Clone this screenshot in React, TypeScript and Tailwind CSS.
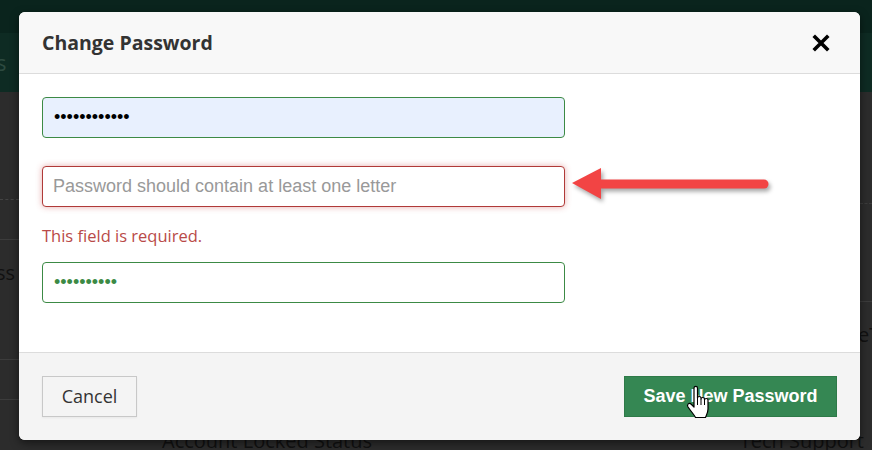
import React from "react";

function CloseIcon() {
  return (
    <svg width="18" height="18" viewBox="0 0 18 18" aria-hidden="true">
      <path d="M3 3 L15 15 M15 3 L3 15" stroke="#000" strokeWidth="3.6" strokeLinecap="square" />
    </svg>
  );
}

function Arrow() {
  return (
    <svg
      width="212"
      height="44"
      viewBox="0 0 212 44"
      className="pointer-events-none absolute left-[565px] top-[163px]"
      style={{ filter: "drop-shadow(2px 3px 2px rgba(0,0,0,0.35))" }}
    >
      <line x1="32" y1="21" x2="199" y2="21" stroke="#f24444" strokeWidth="9" strokeLinecap="round" />
      <path d="M7 20 L36 5 L36 36 Z" fill="#f24444" />
    </svg>
  );
}

function HandCursor() {
  return (
    <svg
      width="26"
      height="34"
      viewBox="0 0 26 34"
      className="pointer-events-none absolute left-[685px] top-[385px]"
    >
      <path
        d="M9 3 C9 0.8 12.5 0.8 12.5 3 L12.5 13 C12.5 11 16 11 16 13 L16 14 C16 12 19.5 12 19.5 14 L19.5 15 C19.5 13 23 13 23 15 L23 24 C23 28 21.5 30 20.5 32.5 L10.5 32.5 C9.5 30 6 26.5 3 22 C1.5 19.5 4 17 6.5 19.5 L9 22 Z"
        fill="#fff"
        stroke="#000"
        strokeWidth="1.2"
        strokeLinejoin="round"
      />
      <path d="M12.5 13 L12.5 20 M16 14 L16 20 M19.5 15 L19.5 20" stroke="#000" strokeWidth="1" />
    </svg>
  );
}

function Backdrop() {
  return (
    <div className="flex h-full flex-col">
      <div className="h-[33px] bg-[#0a241d]" />
      <div className="flex h-[59px] items-center bg-[#0e2b23] text-[22px] text-[#2d4a40]">
        <span className="-ml-[4px]">s</span>
      </div>
      <div className="flex flex-1 justify-between">
        <div className="flex w-[19px] flex-col">
          <div className="h-[108px] border-b border-dashed border-[#444]" />
          <div className="h-[40px] border-b border-[#3c3c3c]" />
          <div className="h-[120px] border-b border-[#3c3c3c] pt-[19px] text-[20px] leading-[28px] text-[#111]">
            <span className="-ml-[4px]">ss</span>
          </div>
          <div className="h-[40px] border-b border-[#3c3c3c]" />
        </div>
        <div className="flex w-[12px] flex-col overflow-hidden">
          <div className="h-[112px] border-b border-dashed border-[#3c3c3c]" />
          <div className="h-[98px] border-b border-[#3c3c3c]" />
          <div className="pt-[18px] text-[20px] text-[#111]">
            <span className="-ml-[2px]">eT</span>
          </div>
        </div>
      </div>
      <div className="flex h-[14px] items-start justify-between overflow-hidden pl-[162px] pr-[8px] text-[20px] leading-[16px] text-[#111]">
        <span className="-mt-[3px]">Account Locked Status</span>
        <span className="-mt-[3px]">Tech Support</span>
      </div>
    </div>
  );
}

export default function App() {
  return (
    <div className="relative h-[450px] w-[872px] overflow-hidden bg-[#2c2c2c] font-['Open_Sans',sans-serif]">
      <Backdrop />

      <div className="absolute left-[19px] top-[12px] flex h-[428px] w-[841px] flex-col overflow-hidden rounded-[6px] bg-white shadow-[0_3px_9px_rgba(0,0,0,0.5)]">
        {/* header */}
        <div className="flex h-[62px] items-center justify-between border-b border-[#dcdcdc] bg-[#f8f8f8] pl-[23px] pr-[30px]">
          <h2 className="text-[19.5px] font-bold text-[#333]">Change Password</h2>
          <CloseIcon />
        </div>

        {/* body */}
        <div className="flex flex-1 flex-col px-[23px] pt-[23px] font-['Liberation_Sans',Arial,sans-serif]">
          <input
            type="password"
            defaultValue="abcdefghijkl"
            className="h-[41px] w-[523px] rounded-[4px] border border-[#3c8a45] bg-[#e8f0fe] px-[11px] text-[18px] text-black outline-none"
          />
          <input
            type="password"
            placeholder="Password should contain at least one letter"
            className="mt-[28px] h-[41px] w-[523px] rounded-[4px] border border-[#b03a38] bg-white px-[10px] text-[18px] text-[#333] shadow-[0_0_6px_rgba(200,70,70,0.45)] outline-none placeholder:text-[#999]"
          />
          <p className="mt-[17px] font-['Open_Sans',sans-serif] text-[16.5px] leading-[24px] text-[#b94a48]">
            This field is required.
          </p>
          <input
            type="password"
            defaultValue="abcdefghij"
            className="mt-[14px] h-[41px] w-[523px] rounded-[4px] border border-[#3c8a45] bg-white px-[11px] text-[18px] text-[#3c8a45] outline-none"
          />
        </div>

        {/* footer */}
        <div className="flex h-[88px] items-center justify-between border-t border-[#dcdcdc] bg-[#f4f4f4] px-[23px]">
          <button className="h-[41px] w-[95px] border border-[#c8c8c8] bg-[#f4f4f4] text-[18px] text-[#333] shadow-[0_1px_2px_rgba(0,0,0,0.05)]">
            Cancel
          </button>
          <button className="h-[41px] w-[213px] border border-[#2e7a48] bg-[#358753] font-['Liberation_Sans',Arial,sans-serif] text-[18px] font-bold text-white">
            Save New Password
          </button>
        </div>
      </div>

      <Arrow />
      <HandCursor />
    </div>
  );
}
